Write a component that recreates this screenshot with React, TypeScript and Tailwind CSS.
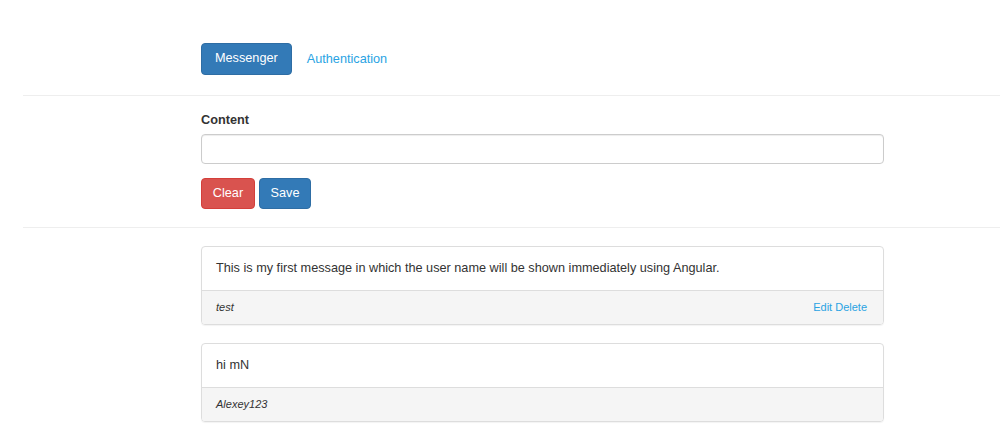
import { useState } from 'react';

const MESSAGES = [
  { id: 1, text: 'This is my first message in which the user name will be shown immediately using Angular.', author: 'test', own: true },
  { id: 2, text: 'hi mN', author: 'Alexey123', own: false },
];

export default function App() {
  const [content, setContent] = useState('');

  return (
    <div className="min-h-[434px] bg-white pl-[23px] pt-[43px] text-[12.7px] text-[#333] font-['Liberation_Sans',Arial,sans-serif]">
      {/* Nav pills */}
      <div className="ml-[178px] flex items-center h-[32px]">
        <button className="h-[32px] px-[13px] rounded-[4px] bg-[#337ab7] border border-[#2e6da4] text-white">
          Messenger
        </button>
        <a className="ml-[2px] px-[13px] text-[#29a3e3] leading-[32px]">Authentication</a>
      </div>

      <hr className="mt-[20px] border-0 border-t border-[#eeeeee]" />

      {/* Form */}
      <div className="ml-[178px] w-[683px] pt-[14px]">
        <label className="block font-bold leading-[20px] mb-[4px]">Content</label>
        <input
          value={content}
          onChange={(e) => setContent(e.target.value)}
          className="block w-full h-[30px] px-[12px] rounded-[4px] border border-[#cccccc] shadow-[inset_0_1px_1px_rgba(0,0,0,0.075)] outline-none"
        />
        <div className="mt-[14px] flex gap-[4px]">
          <button
            onClick={() => setContent('')}
            className="h-[31px] w-[54px] rounded-[4px] bg-[#d9534f] border border-[#d43f3a] text-white"
          >
            Clear
          </button>
          <button className="h-[31px] w-[52px] rounded-[4px] bg-[#337ab7] border border-[#2e6da4] text-white">
            Save
          </button>
        </div>
      </div>

      <hr className="mt-[18px] border-0 border-t border-[#eeeeee]" />

      {/* Messages */}
      <div className="ml-[178px] w-[683px] pt-[18px] flex flex-col gap-[18px]">
        {MESSAGES.map((m) => (
          <div key={m.id} className="rounded-[4px] border border-[#dddddd] shadow-[0_1px_1px_rgba(0,0,0,0.05)] overflow-hidden">
            <div className="h-[43px] px-[14px] flex items-center">{m.text}</div>
            <div className="h-[34px] px-[14px] flex items-center justify-between bg-[#f5f5f5] border-t border-[#dddddd] text-[11px]">
              <i>{m.author}</i>
              {m.own && (
                <span className="text-[#29a3e3] pr-[2px]">
                  <a>Edit</a> <a>Delete</a>
                </span>
              )}
            </div>
          </div>
        ))}
      </div>
    </div>
  );
}
